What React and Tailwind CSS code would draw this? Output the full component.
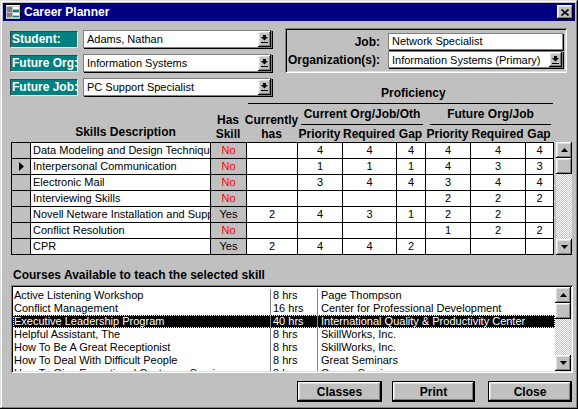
import React from "react";

const raised =
  "shadow-[inset_-1px_-1px_0_#000,inset_1px_1px_0_#fff,inset_-2px_-2px_0_#808080,inset_2px_2px_0_#dfdfdf]";
const sunken =
  "shadow-[inset_1px_1px_0_#808080,inset_-1px_-1px_0_#fff,inset_2px_2px_0_#000,inset_-2px_-2px_0_#dfdfdf]";
const checker =
  "bg-[repeating-conic-gradient(#c0c0c0_0%_25%,#ffffff_0%_50%)] bg-[length:2px_2px]";

const skills = [
  { name: "Data Modeling and Design Techniques", has: "No", cur: "", cp: 4, cr: 4, cg: 4, fp: 4, fr: 4, fg: 4 },
  { name: "Interpersonal Communication", has: "No", cur: "", cp: 1, cr: 1, cg: 1, fp: 4, fr: 3, fg: 3, current: true },
  { name: "Electronic Mail", has: "No", cur: "", cp: 3, cr: 4, cg: 4, fp: 3, fr: 4, fg: 4 },
  { name: "Interviewing Skills", has: "No", cur: "", cp: "", cr: "", cg: "", fp: 2, fr: 2, fg: 2 },
  { name: "Novell Netware Installation and Support", has: "Yes", cur: 2, cp: 4, cr: 3, cg: 1, fp: 2, fr: 2, fg: "" },
  { name: "Conflict Resolution", has: "No", cur: "", cp: "", cr: "", cg: "", fp: 1, fr: 2, fg: 2 },
  { name: "CPR", has: "Yes", cur: 2, cp: 4, cr: 4, cg: 2, fp: "", fr: "", fg: "" },
];

const courses = [
  ["Active Listening Workshop", "8 hrs", "Page Thompson"],
  ["Conflict Management", "16 hrs", "Center for Professional Development"],
  ["Executive Leadership Program", "40 hrs", "International Quality & Productivity Center", true],
  ["Helpful Assistant, The", "8 hrs", "SkillWorks, Inc."],
  ["How To Be A Great Receptionist", "8 hrs", "SkillWorks, Inc."],
  ["How To Deal With Difficult People", "8 hrs", "Great Seminars"],
  ["How To Give Exceptional Customer Service", "8 hrs", "Career Seminars"],
];

function DropArrow() {
  return (
    <svg width="7" height="8" viewBox="0 0 7 8">
      <rect x="2" y="0" width="3" height="2" fill="#000" />
      <polygon points="0,2 7,2 3.5,5.5" fill="#000" />
      <rect x="0" y="7" width="7" height="1" fill="#000" />
    </svg>
  );
}

function Combo({ value, className = "" }) {
  return (
    <div className={`flex h-[18px] bg-white border border-[#808080] shadow-[1px_1px_0_#000] ${className}`}>
      <div className="flex-1 overflow-hidden whitespace-nowrap pl-[3px] text-[11px] leading-[16px] text-black">
        {value}
      </div>
      <div className={`flex w-[13px] items-center justify-center bg-[#c0c0c0] ${raised}`}>
        <DropArrow />
      </div>
    </div>
  );
}

function Label({ children }) {
  return (
    <div className="flex h-[17px] w-[68px] items-center whitespace-nowrap border-t border-l border-[#404040] border-b-white border-r-white border-b border-r bg-[#008080] pl-[1px] text-[12px] font-bold text-white">
      {children}
    </div>
  );
}

function Arrow({ up }) {
  return (
    <svg width="7" height="4" viewBox="0 0 7 4">
      <polygon points={up ? "3.5,0 7,4 0,4" : "0,0 7,0 3.5,4"} fill="#000" />
    </svg>
  );
}

function ScrollBar({ className = "" }) {
  return (
    <div className={`flex w-[16px] flex-col ${className}`}>
      <div className={`flex h-[16px] items-center justify-center bg-[#c0c0c0] ${raised}`}>
        <Arrow up />
      </div>
      <div className={`h-[16px] bg-[#c0c0c0] ${raised}`} />
      <div className={`flex-1 ${checker}`} />
      <div className={`flex h-[16px] items-center justify-center bg-[#c0c0c0] ${raised}`}>
        <Arrow />
      </div>
    </div>
  );
}

function Button({ children, className = "" }) {
  return (
    <div className={`h-[21px] border border-black bg-[#c0c0c0] ${className}`}>
      <div className={`flex h-full items-center justify-center text-[12px] font-bold text-black ${raised}`}>
        {children}
      </div>
    </div>
  );
}

const cell = "h-[16px] border-r border-b border-black text-[11px] leading-[15px] whitespace-nowrap overflow-hidden";

export default function App() {
  return (
    <div className="h-[409px] w-[578px] bg-[#c0c0c0] font-['Liberation_Sans','Arial',sans-serif] text-black">
      <div className="flex h-full w-full flex-col p-[3px] shadow-[inset_-1px_-1px_0_#000,inset_1px_1px_0_#dfdfdf,inset_-2px_-2px_0_#808080,inset_2px_2px_0_#fff]">
        {/* title bar */}
        <div className="flex h-[18px] items-center bg-[#000080] pl-[2px] pr-[2px]">
          <svg width="16" height="16" viewBox="0 0 16 16">
            <rect x="0.5" y="0.5" width="15" height="15" fill="#c0c0c0" stroke="#000" />
            <rect x="1" y="1" width="14" height="1" fill="#fff" />
            <rect x="2" y="3" width="5" height="5" fill="#808080" />
            <rect x="2" y="9" width="5" height="4" fill="#808080" />
            <rect x="8" y="3" width="6" height="2" fill="#fff" />
            <rect x="8" y="6" width="6" height="2" fill="#008080" />
            <rect x="8" y="9" width="6" height="2" fill="#fff" />
            <rect x="8" y="12" width="6" height="1" fill="#008080" />
          </svg>
          <span className="ml-[3px] flex-1 text-[12px] font-bold text-white">Career Planner</span>
          <div className={`flex h-[14px] w-[16px] items-center justify-center bg-[#c0c0c0] ${raised}`}>
            <svg width="8" height="7" viewBox="0 0 8 7">
              <path d="M0.5 0.5 L7.5 6.5 M7.5 0.5 L0.5 6.5" stroke="#000" strokeWidth="1.6" />
            </svg>
          </div>
        </div>

        <div className="flex flex-col pl-[5px]">
          {/* top section */}
          <div className="mt-[7px] flex">
            <div className="ml-[2px] flex flex-col gap-[6px] pt-[2px]">
              {[
                ["Student:", "Adams, Nathan"],
                ["Future Org:", "Information Systems"],
                ["Future Job:", "PC Support Specialist"],
              ].map(([l, v]) => (
                <div key={l} className="flex items-center gap-[5px]">
                  <Label>{l}</Label>
                  <Combo value={v} className="w-[189px]" />
                </div>
              ))}
            </div>
            <div className="ml-[13px] flex flex-col">
              <div className={`grid h-[45px] w-[282px] grid-cols-[93px_175px] content-start gap-x-[8px] gap-y-[1px] px-[2px] pt-[5px] ${sunken}`}>
                <div className="flex h-[17px] items-center justify-end text-[12px] font-bold">Job:</div>
                <div className="h-[17px] overflow-hidden whitespace-nowrap border border-[#808080] bg-white pl-[3px] text-[11px] leading-[15px] shadow-[1px_1px_0_#000]">
                  Network Specialist
                </div>
                <div className="flex h-[17px] items-center justify-end text-[12px] font-bold whitespace-nowrap">Organization(s):</div>
                <Combo value="Information Systems (Primary)" className="!h-[17px]" />
              </div>
              <div className="mt-[13px] h-[14px] pl-[96px] text-[12px] font-bold leading-[14px]">Proficiency</div>
            </div>
          </div>

          {/* column headers */}
          <div className="ml-[3px] flex h-[42px] text-[12px] font-bold leading-[14px]">
            <div className="flex w-[199px] items-end justify-center pb-[3px] pl-[30px]">Skills Description</div>
            <div className="flex w-[36px] flex-col items-center justify-end pb-[1px]">
              <span>Has</span>
              <span>Skill</span>
            </div>
            <div className="flex w-[307px] flex-col">
              <div className="ml-[2px] h-[4px] border-b border-black" />
              <div className="flex flex-1">
                <div className="flex w-[51px] flex-col items-center justify-end pb-[1px]">
                  <span>Currently</span>
                  <span>has</span>
                </div>
                <div className="flex w-[256px] flex-col">
                  <div className="flex h-[21px]">
                    <div className="ml-[4px] flex w-[122px] items-end justify-center border-b border-black pb-[3px] whitespace-nowrap">
                      Current Org/Job/Oth
                    </div>
                    <div className="ml-[7px] flex w-[121px] items-end justify-center border-b border-black pb-[3px] whitespace-nowrap">
                      Future Org/Job
                    </div>
                  </div>
                  <div className="flex flex-1 items-center whitespace-nowrap">
                    <span className="w-[45px] text-center">Priority</span>
                    <span className="w-[54px] text-center">Required</span>
                    <span className="w-[29px] text-center">Gap</span>
                    <span className="w-[45px] text-center">Priority</span>
                    <span className="w-[55px] text-center">Required</span>
                    <span className="w-[28px] text-center">Gap</span>
                  </div>
                </div>
              </div>
            </div>
          </div>

          {/* skills grid */}
          <div className="ml-[3px] flex">
            <div className="grid w-[543px] grid-cols-[19px_180px_36px_51px_45px_54px_29px_45px_55px_28px] border-t border-l border-black">
              {skills.map((s) => (
                <React.Fragment key={s.name}>
                  <div className={`${cell} flex items-center justify-center bg-[#c0c0c0]`}>
                    {s.current && (
                      <svg width="5" height="9" viewBox="0 0 5 9">
                        <polygon points="0,0 5,4.5 0,9" fill="#000" />
                      </svg>
                    )}
                  </div>
                  <div className={`${cell} bg-white pl-[2px]`}>{s.name}</div>
                  <div className={`${cell} bg-[#c0c0c0] text-center ${s.has === "No" ? "text-[#ff0000]" : "text-black"}`}>
                    {s.has}
                  </div>
                  <div className={`${cell} bg-white text-center`}>{s.cur}</div>
                  <div className={`${cell} bg-white text-center`}>{s.cp}</div>
                  <div className={`${cell} bg-white text-center`}>{s.cr}</div>
                  <div className={`${cell} bg-white text-center`}>{s.cg}</div>
                  <div className={`${cell} bg-white text-center`}>{s.fp}</div>
                  <div className={`${cell} bg-white text-center`}>{s.fr}</div>
                  <div className={`${cell} bg-white text-center`}>{s.fg}</div>
                </React.Fragment>
              ))}
            </div>
            <ScrollBar className="ml-[2px]" />
          </div>

          <div className="ml-[5px] mt-[13px] h-[14px] text-[12px] font-bold leading-[14px]">
            Courses Available to teach the selected skill
          </div>

          {/* course list */}
          <div className={`ml-[3px] mt-[3px] flex h-[88px] w-[562px] bg-white p-[2px] ${sunken}`}>
            <div className="flex-1 overflow-hidden pt-[2px] text-[11px] leading-[13px]">
              {courses.map(([name, hrs, org, sel]) => (
                <div
                  key={name}
                  className={`flex h-[13px] whitespace-nowrap ${sel ? "bg-black text-white outline-1 outline-dotted outline-offset-[-1px] outline-white" : ""}`}
                >
                  <div className="w-[258px] overflow-hidden border-r border-[#808080] pl-[1px]">{name}</div>
                  <div className="w-[47px] overflow-hidden border-r border-[#808080] pl-[2px]">{hrs}</div>
                  <div className="flex-1 overflow-hidden pl-[3px]">{org}</div>
                </div>
              ))}
            </div>
            <ScrollBar />
          </div>

          {/* buttons */}
          <div className="mt-[8px] flex justify-end pr-[3px]">
            <Button className="w-[85px]">Classes</Button>
            <Button className="ml-[10px] w-[83px]">Print</Button>
            <Button className="ml-[13px] w-[84px]">Close</Button>
          </div>
        </div>
      </div>
    </div>
  );
}
